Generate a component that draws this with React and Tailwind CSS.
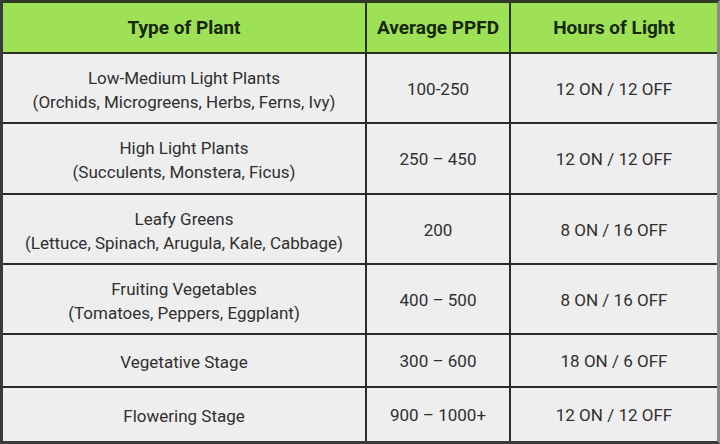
const rows = [
  { plant: "Low-Medium Light Plants", sub: "(Orchids, Microgreens, Herbs, Ferns, Ivy)", ppfd: "100-250", hours: "12 ON / 12 OFF" },
  { plant: "High Light Plants", sub: "(Succulents, Monstera, Ficus)", ppfd: "250 – 450", hours: "12 ON / 12 OFF" },
  { plant: "Leafy Greens", sub: "(Lettuce, Spinach, Arugula, Kale, Cabbage)", ppfd: "200", hours: "8 ON / 16 OFF" },
  { plant: "Fruiting Vegetables", sub: "(Tomatoes, Peppers, Eggplant)", ppfd: "400 – 500", hours: "8 ON / 16 OFF" },
  { plant: "Vegetative Stage", ppfd: "300 – 600", hours: "18 ON / 6 OFF" },
  { plant: "Flowering Stage", ppfd: "900 – 1000+", hours: "12 ON / 12 OFF" },
];

const App = () => {
  return (
    <div
      className="w-[720px] h-[444px] bg-[#3a3a3a] overflow-hidden"
      style={{ fontFamily: "Roboto, 'Liberation Sans', sans-serif" }}
    >
      <div className="grid grid-cols-[364px_144px_206px] grid-rows-[51px_70px_71px_70px_70px_53px_53px] border-t-[3px] border-t-[#2e3a25] border-l-[3px] border-l-[#3a3a3a] border-r-[3px] border-r-[#8a8a8a] border-b-[3px] border-b-[#3a3a3a] h-full box-border">
        {/* Header */}
        <div className="bg-[#9ee157] border-b-2 border-r-2 border-[#2a3322] pt-[2px] flex items-center justify-center text-[19px] font-bold text-[#17260f]">
          Type of Plant
        </div>
        <div className="bg-[#9ee157] border-b-2 border-r-2 border-[#2a3322] pt-[2px] flex items-center justify-center text-[19px] font-bold text-[#17260f]">
          Average PPFD
        </div>
        <div className="bg-[#9ee157] border-b-2 border-[#2a3322] pt-[2px] flex items-center justify-center text-[19px] font-bold text-[#17260f]">
          Hours of Light
        </div>

        {rows.map((r, i) => {
          const last = i === rows.length - 1;
          const rowBorder = last ? "" : "border-b-2";
          return [
            <div key={`p${i}`} className={`bg-[#eeeeee] ${rowBorder} border-r-2 border-[#2b2b2b] pt-[3px] flex flex-col items-center justify-center text-[17px] leading-[24px] text-[#303030]`}>
              <span>{r.plant}</span>
              {r.sub && <span>{r.sub}</span>}
            </div>,
            <div key={`f${i}`} className={`bg-[#eeeeee] ${rowBorder} border-r-2 border-[#2b2b2b] pt-[3px] flex items-center justify-center text-[17px] text-[#303030]`}>
              {r.ppfd}
            </div>,
            <div key={`h${i}`} className={`bg-[#eeeeee] ${rowBorder} border-[#2b2b2b] pt-[3px] flex items-center justify-center text-[17px] text-[#303030]`}>
              {r.hours}
            </div>,
          ];
        })}
      </div>
    </div>
  );
};

export default App;
